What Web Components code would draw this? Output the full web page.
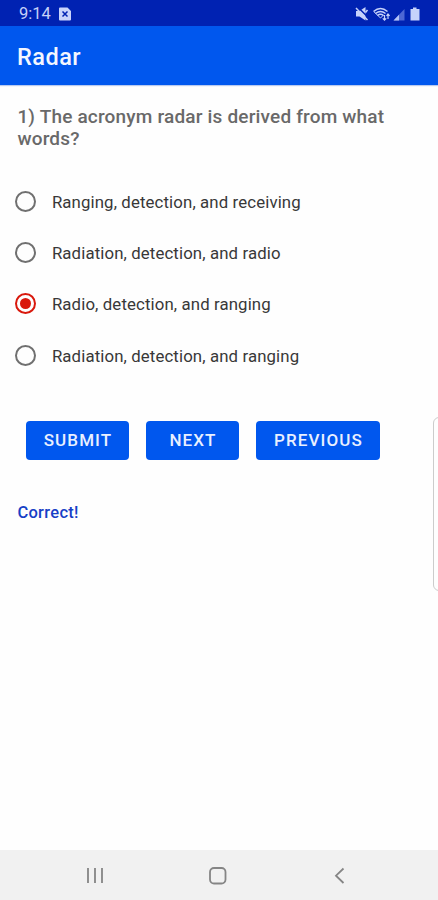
<!DOCTYPE html>
<html lang="en">
<head>
<meta charset="utf-8">
<title>Radar</title>
<style>
    html, body {
        margin: 0;
        height: 100%;
        background: #fefefe;
        overflow: hidden;
        font-family: Roboto, "Liberation Sans", sans-serif;
    }
</style>
</head>
<body>
<quiz-app></quiz-app>

<template id="status_bar">
    <style>
        :host {
            display: flex;
            align-items: center;
            justify-content: space-between;
            box-sizing: border-box;
            height: 26px;
            padding: 1px 16px 0 19px;
            background: #0022b2;
            color: #c6d1f8;
            font-size: 16.500px;
            line-height: 24px;
        }
        .left { display: flex; align-items: center; gap: 8px; }
        svg { display: block; }
    </style>
    <div class="left">
        <span><slot></slot></span>
        <svg width="12" height="14" viewBox="0 0 12 14">
            <path fill="#c9d4fb" d="M1 .5h7.500L12 4v8.500a1 1 0 0 1-1 1H1a1 1 0 0 1-1-1v-11a1 1 0 0 1 1-1z"/>
            <path stroke="#0022b2" stroke-width="1.500" d="M3.500 4.500l5 5M8.500 4.500l-5 5"/>
        </svg>
    </div>
    <svg width="68" height="16" viewBox="0 0 68 16">
        <g fill="#c6d2fb">
            <path d="M2 5h3.500L11.500 1v13.500L5.500 10.500H2z"/>
            <path d="M56.500 3H59V1.500h3.500V3h3v11.500h-9z"/>
        </g>
        <path stroke="#0022b2" stroke-width="1.500" d="M3.500 .8l11 11"/>
        <g fill="none" stroke="#c6d2fb" stroke-width="1.500">
            <path d="M2 2l11.500 12M11.500 6.500L13.500 4"/>
            <path d="M19.500 5.500q7-6 14 0M21.500 7.500q5-4 10 0M23.500 9.500q3-2.400 6 0"/>
            <path d="M20 5.800l6.500 6.200 3-3" stroke-width="1"/>
            <path d="M30.500 9v5M28.800 12.300l1.700 1.900 1.700-1.900M34 13V8M32.500 9.800L34 8l1.600 1.800" stroke-width="1.200"/>
        </g>
        <path fill="#4d67d4" d="M39.500 14.500L50.500 3v11.500z"/>
        <path fill="#b4c2f6" d="M39.500 14.500l5.500-5.700v5.700z"/>
    </svg>
</template>

<template id="app_header">
    <style>
        :host {
            display: flex;
            align-items: center;
            box-sizing: border-box;
            height: 59px;
            padding: 3px 17px 0;
            background: #0057ee;
            color: #f4f7ff;
            font-size: 23.500px;
            font-weight: 500;
            letter-spacing: .500px;
            box-shadow: 0 1px 1px #b9caef;
        }
    </style>
    <slot></slot>
</template>

<template id="quiz_option">
    <style>
        :host {
            display: flex;
            align-items: center;
            height: 51.200px;
            gap: 15.500px;
            color: #383838;
            font-size: 16.800px;
            letter-spacing: .120px;
            cursor: pointer;
        }
        .circle {
            display: flex;
            align-items: center;
            justify-content: center;
            box-sizing: border-box;
            width: 21px;
            height: 21px;
            border: 2px solid #707070;
            border-radius: 50%;
        }
        :host([selected]) .circle { border-color: #d9180c; }
        :host([selected]) .circle::after {
            content: "";
            width: 11px;
            height: 11px;
            border-radius: 50%;
            background: #d9180c;
        }
        .label { padding-top: 1px; }
    </style>
    <div class="circle"></div>
    <div class="label"><slot></slot></div>
</template>

<template id="quiz_button">
    <style>
        :host { display: block; }
        button {
            display: block;
            width: 100%;
            height: 39px;
            padding: 0 0 0 1px;
            border: 0;
            border-radius: 4px;
            background: #0057ee;
            color: #e9f0ff;
            font: 500 17px Roboto, "Liberation Sans", sans-serif;
            letter-spacing: 1.100px;
        }
    </style>
    <button><slot></slot></button>
</template>

<template id="nav_bar">
    <style>
        :host {
            display: grid;
            grid-template-columns: 24px 24px 24px;
            column-gap: 98.500px;
            align-items: center;
            box-sizing: border-box;
            height: 50px;
            padding-left: 83px;
            background: #f1f1f1;
        }
        svg { display: block; fill: none; stroke: #858585; stroke-width: 1.800; }
    </style>
    <svg width="24" height="24" viewBox="0 0 24 24"><path d="M5 5v15M12 5v15M19 5v15"/></svg>
    <svg width="24" height="24" viewBox="0 0 24 24"><rect x="4" y="5" width="15.500" height="15.500" rx="4"/></svg>
    <svg width="24" height="24" viewBox="0 0 24 24"><path d="M15.500 5.500L8 12.700l7.500 7.300"/></svg>
</template>

<template id="quiz_app">
    <style>
        :host {
            display: flex;
            flex-direction: column;
            position: relative;
            height: 900px;
            overflow: hidden;
        }
        main { flex: 1; padding: 21px 15.400px 0; }
        h1 {
            margin: 0 2px;
            color: #696969;
            font-size: 19px;
            font-weight: 500;
            line-height: 22px;
            letter-spacing: .180px;
        }
        .options { margin-top: 26px; }
        .actions {
            display: grid;
            grid-template-columns: 103px 93px 124px;
            column-gap: 17px;
            margin: 40px 0 0 10.600px;
        }
        .result {
            margin: 42px 0 0 2px;
            color: #173fc6;
            font-size: 16.500px;
            font-weight: 500;
            line-height: 22px;
            letter-spacing: .300px;
        }
        /* edge panel handle over the right side */
        .handle {
            position: absolute;
            top: 417px;
            right: -8px;
            box-sizing: border-box;
            width: 13px;
            height: 174px;
            border: 1px solid #ccc;
            border-radius: 6px;
        }
    </style>
    <status-bar>9:14</status-bar>
    <app-header>Radar</app-header>
    <main>
        <h1>1) The acronym radar is derived from what words?</h1>
        <div class="options">
            <quiz-option>Ranging, detection, and receiving</quiz-option>
            <quiz-option>Radiation, detection, and radio</quiz-option>
            <quiz-option selected>Radio, detection, and ranging</quiz-option>
            <quiz-option>Radiation, detection, and ranging</quiz-option>
        </div>
        <div class="actions">
            <quiz-button>SUBMIT</quiz-button>
            <quiz-button>NEXT</quiz-button>
            <quiz-button>PREVIOUS</quiz-button>
        </div>
        <div class="result">Correct!</div>
    </main>
    <nav-bar></nav-bar>
    <div class="handle"></div>
</template>

<script>
    (function quizElements(customElements) {
        'use strict'

        class BaseElement extends HTMLElement {
            constructor() {
                super();
                // status-bar -> #status_bar
                const id = this.localName.replace('-', '_');
                const templ = document.getElementById(id);
                const shadowRoot = this.attachShadow({ mode: 'open' });
                shadowRoot.appendChild(document.importNode(templ.content, true));
            }
        }

        class QuizOption extends BaseElement {
            connectedCallback() {
                this.addEventListener('click', this._onClick.bind(this));
            }

            // Only one option of the group stays selected
            _onClick() {
                for (const option of this.parentNode.children) {
                    option.toggleAttribute('selected', option === this);
                }
            }
        }

        customElements.define('status-bar', class extends BaseElement {});
        customElements.define('app-header', class extends BaseElement {});
        customElements.define('quiz-option', QuizOption);
        customElements.define('quiz-button', class extends BaseElement {});
        customElements.define('nav-bar', class extends BaseElement {});
        customElements.define('quiz-app', class extends BaseElement {});

    })(window.customElements);
</script>
</body>
</html>
